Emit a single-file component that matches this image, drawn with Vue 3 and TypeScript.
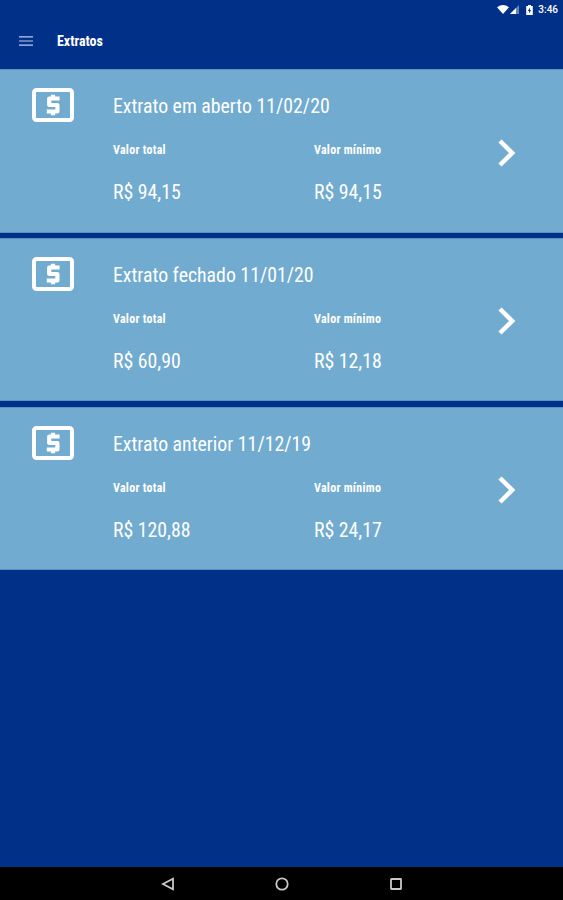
<script setup lang="ts">
interface Statement {
  title: string
  total: string
  minimum: string
}

const statements: Statement[] = [
  { title: 'Extrato em aberto 11/02/20', total: 'R$ 94,15', minimum: 'R$ 94,15' },
  { title: 'Extrato fechado 11/01/20', total: 'R$ 60,90', minimum: 'R$ 12,18' },
  { title: 'Extrato anterior 11/12/19', total: 'R$ 120,88', minimum: 'R$ 24,17' },
]
</script>

<template>
  <div class="screen">
    <div class="status-bar">
      <svg class="wifi" viewBox="0 0 12 9"><path d="M0 2.2Q6-2.2 12 2.2L6 9Z" /></svg>
      <svg class="signal" viewBox="0 0 9 9">
        <path d="M9 0V9H0Z" opacity=".4" />
        <path d="M6 3V9H0Z" />
      </svg>
      <svg class="battery" viewBox="0 0 7 10">
        <path fill-rule="evenodd" d="M2 0H5V1H6.8V10H.2V1H2ZM3.9 2.5L1.9 6H3.1V8.6L5.1 5H3.9Z" />
      </svg>
      <span class="clock">3:46</span>
    </div>
    <header class="toolbar">
      <svg class="menu" viewBox="0 0 14 10"><path d="M0 .8H14M0 5H14M0 9.2H14" /></svg>
      <h1>Extratos</h1>
    </header>
    <main class="list">
      <article v-for="item in statements" :key="item.title" class="card">
        <svg class="money" viewBox="0 0 42 34">
          <rect x="2" y="2" width="38" height="30" rx="2.5" />
          <path d="M27.6 10.5H17.2V17H25.4V23.5H14.8M21 6.7V10.5M21 23.5V27.3" />
        </svg>
        <div class="details">
          <h2>{{ item.title }}</h2>
          <div class="values">
            <div>
              <p class="label">Valor total</p>
              <p class="amount">{{ item.total }}</p>
            </div>
            <div>
              <p class="label">Valor mínimo</p>
              <p class="amount">{{ item.minimum }}</p>
            </div>
          </div>
        </div>
        <svg class="chevron" viewBox="0 0 18 28"><path d="M2 2L14.2 14L2 26" /></svg>
      </article>
    </main>
    <nav class="nav-bar">
      <svg viewBox="0 0 14 14"><path d="M12 1.8V12.2L2 7Z" /></svg>
      <svg viewBox="0 0 14 14"><circle cx="7" cy="7" r="5.7" /></svg>
      <svg viewBox="0 0 14 14"><rect x="2" y="2" width="10" height="10" rx=".5" /></svg>
    </nav>
  </div>
</template>

<style>
body {
  background: #003087;
}
</style>

<style scoped>
.screen {
  display: flex;
  flex-direction: column;
  width: 563px;
  height: 900px;
  overflow: hidden;
  background: #003087;
  color: #fff;
  font-family: 'Roboto Condensed', Roboto, sans-serif;
  font-stretch: 75%;
}
h1,
h2,
p {
  margin: 0;
}
.status-bar {
  display: flex;
  flex: none;
  align-items: center;
  justify-content: flex-end;
  height: 19px;
  padding-right: 5px;
  fill: #fff;
}
.wifi {
  width: 12px;
  height: 9px;
}
.signal {
  width: 9px;
  height: 9px;
  margin-left: 1px;
}
.battery {
  width: 7px;
  height: 10px;
  margin-left: 7px;
}
.clock {
  margin-left: 5px;
  font-family: Roboto, sans-serif;
  font-size: 10px;
  font-stretch: 100%;
  font-weight: 500;
  line-height: 19px;
}
.toolbar {
  display: flex;
  flex: none;
  align-items: center;
  height: 44px;
  padding: 0 0 6px 19px;
}
.menu {
  width: 14px;
  height: 10px;
  margin-right: 24px;
  stroke: #bccbed;
  stroke-width: 1.2;
}
h1 {
  font-size: 14px;
  font-weight: 700;
  line-height: 20px;
}
.list {
  display: flex;
  flex: 1;
  flex-direction: column;
  gap: 5.5px;
  padding-top: 0.4px;
}
.card {
  display: flex;
  height: 163.3px;
  flex: none;
  background: #72abd0;
  box-shadow: inset 0 1px #5b92c4, inset 0 -1px #5b92c4;
}
.money {
  width: 42px;
  height: 34px;
  margin: 18.7px 39px 0 32px;
  fill: none;
  stroke: #fff;
  stroke-width: 4;
}
.money path {
  stroke-width: 4.2;
  stroke-linejoin: round;
}
.details {
  width: 385px;
  padding-top: 26px;
}
h2,
.amount {
  font-size: 19.8px;
  font-weight: 400;
  line-height: 24px;
}
.values {
  display: grid;
  grid-template-columns: 201px 1fr;
  margin-top: 23px;
}
.label {
  font-size: 12px;
  font-weight: 700;
  letter-spacing: 0.27px;
  line-height: 16px;
}
.amount {
  margin-top: 23px;
}
.chevron {
  width: 18px;
  height: 28px;
  margin-top: 69.3px;
  fill: none;
  stroke: #fff;
  stroke-width: 4.5;
}
.nav-bar {
  display: flex;
  flex: none;
  align-items: center;
  justify-content: center;
  gap: 100px;
  height: 33px;
  background: #000;
}
.nav-bar svg {
  width: 14px;
  height: 14px;
  fill: none;
  stroke: #c8c8c8;
  stroke-width: 1.8;
}
</style>
